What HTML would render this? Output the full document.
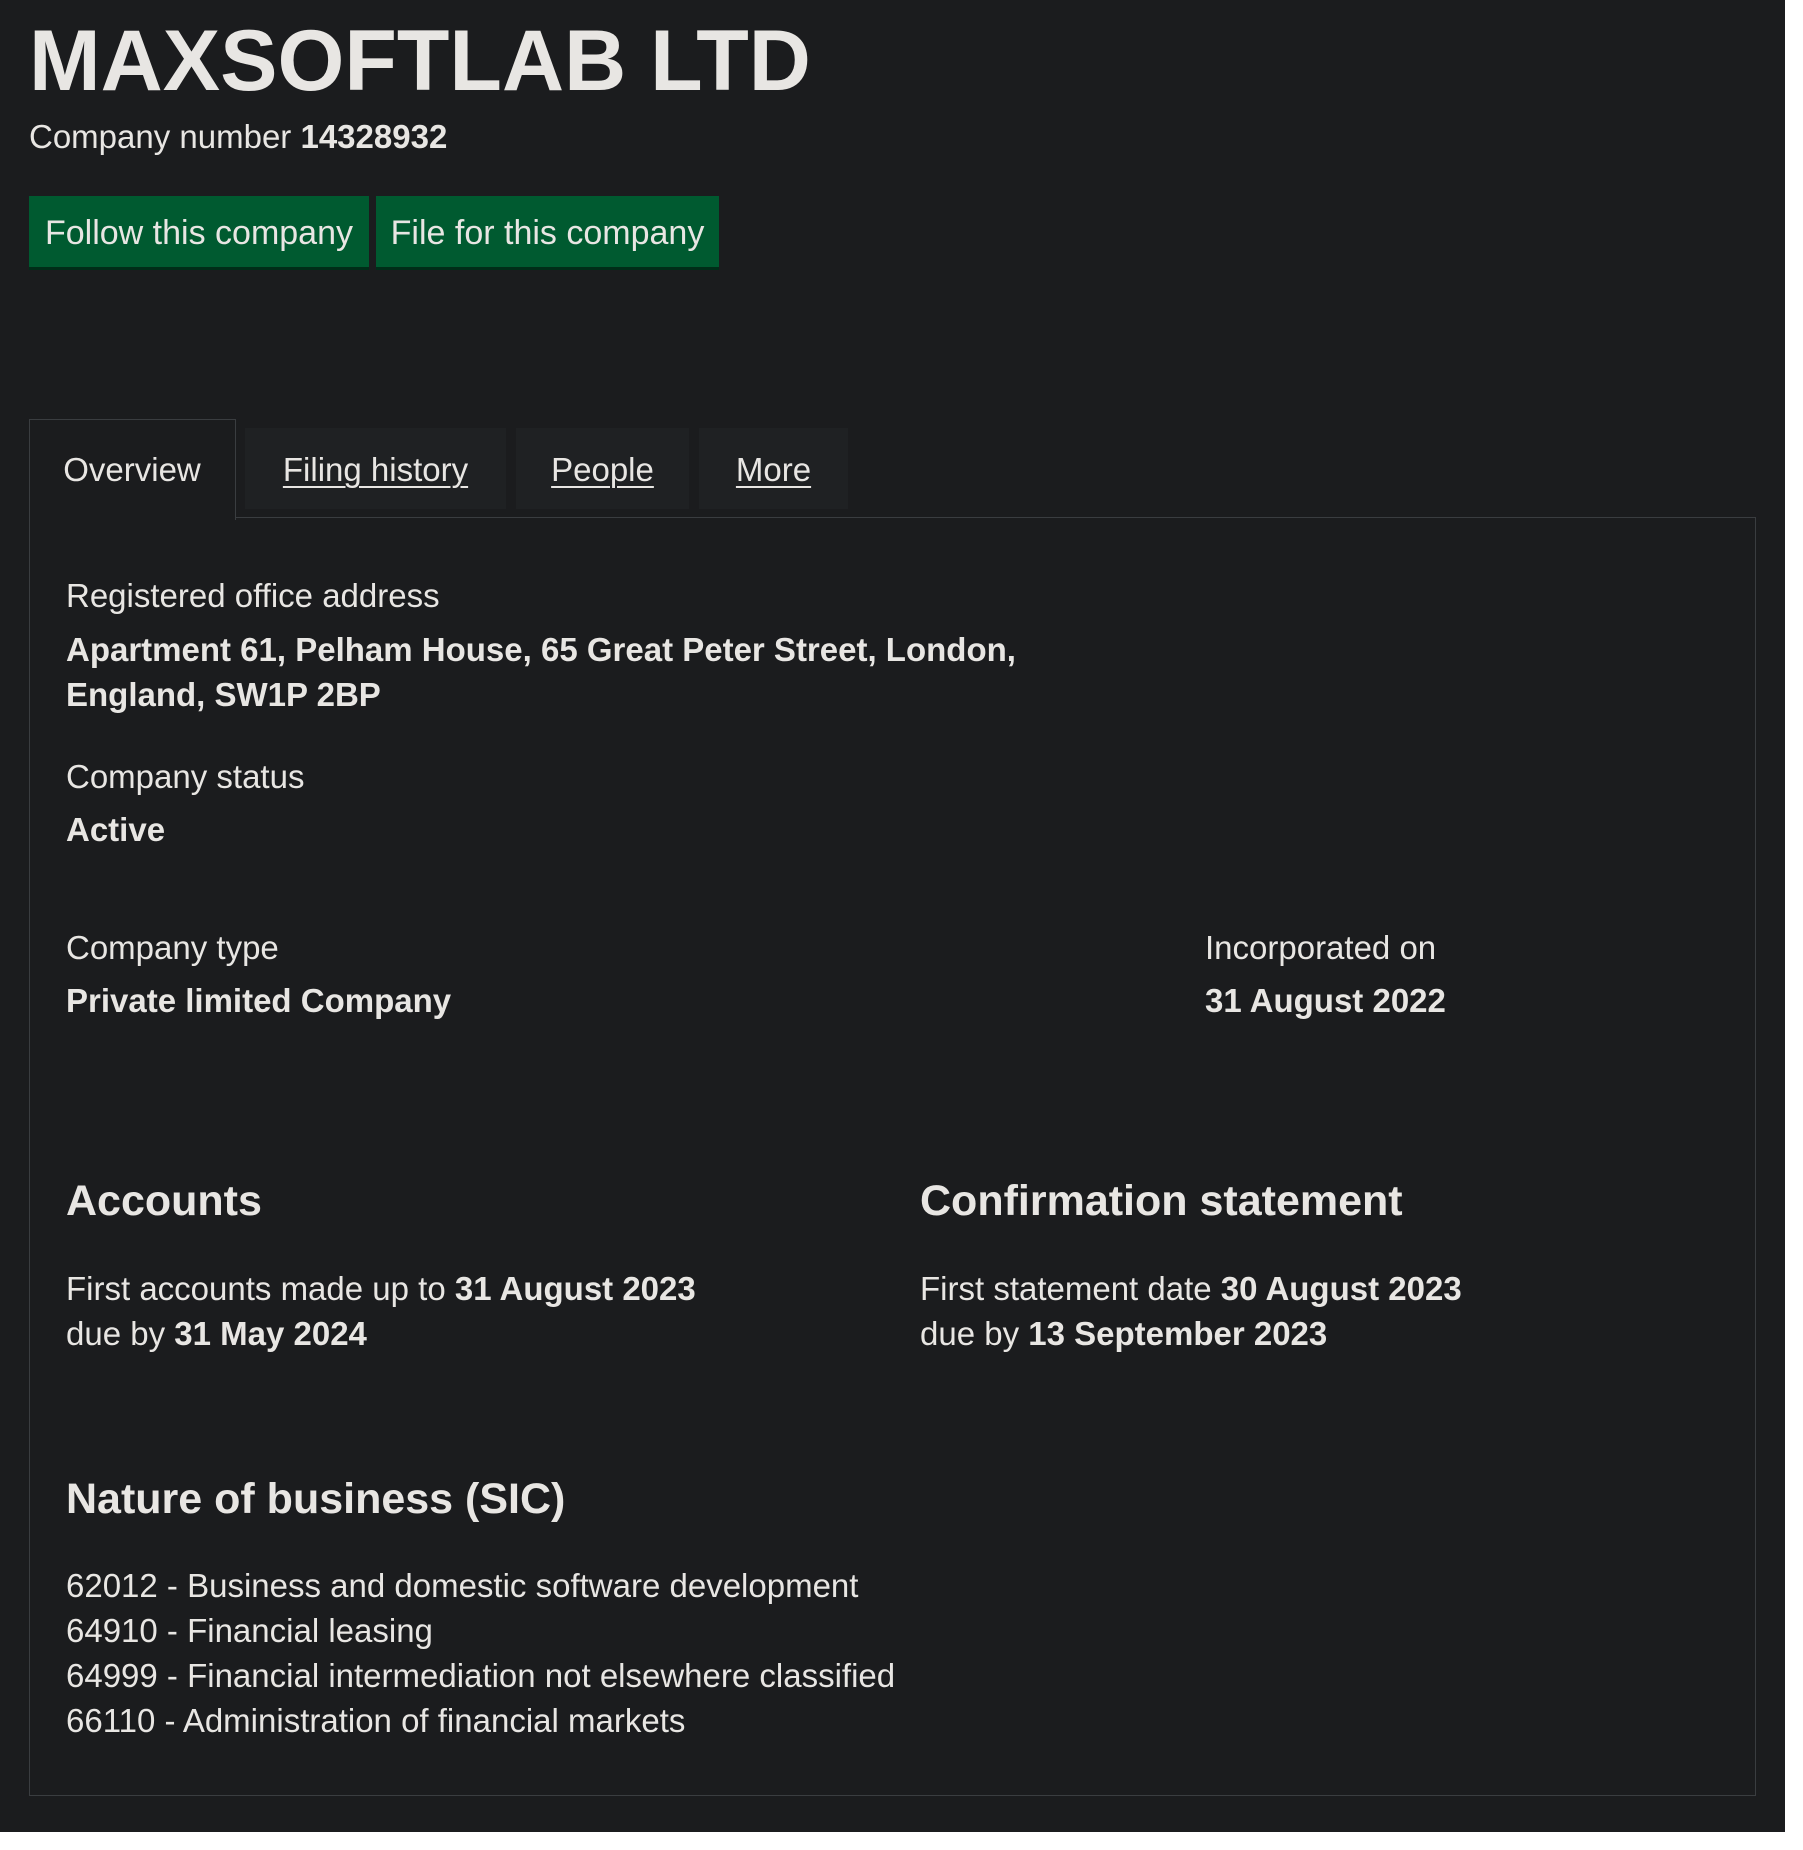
<!DOCTYPE html>
<html><head><meta charset="utf-8"><style>
html,body{margin:0;padding:0;background:#fff;width:1803px;height:1850px;overflow:hidden}
#bg{position:absolute;left:0;top:0;width:1785px;height:1832px;background:#1b1c1e}
.t{position:absolute;white-space:nowrap;color:#e8e6e3;font-family:"Liberation Sans",Arial,sans-serif;font-size:33px;line-height:36px}
b{font-weight:bold}
.btn{position:absolute;top:196px;height:71px;background:#005a30;box-shadow:0 3px 0 #002d18;color:#e8e6e3;font-family:"Liberation Sans",sans-serif;font-size:34px;line-height:74px;text-align:center}
.tab{position:absolute;top:428px;height:81px;background:#1f2123;color:#e8e6e3;font-family:"Liberation Sans",sans-serif;font-size:33px;line-height:84px;text-align:center}
.tab u{text-decoration-thickness:2px;text-underline-offset:5px}
</style></head><body>
<div id="bg"></div>
<div class="t" style="left:29px;top:16px;font-size:86px;line-height:90px;font-weight:bold">MAXSOFTLAB LTD</div>
<div class="t" style="left:29px;top:118px;font-size:33px;line-height:38px">Company number <b>14328932</b></div>
<div class="btn" style="left:29px;width:340px">Follow this company</div>
<div class="btn" style="left:376px;width:343px">File for this company</div>
<div style="position:absolute;left:29px;top:517px;width:1725px;height:1277px;border:1px solid #3a3d40"></div>
<div style="position:absolute;left:29px;top:419px;width:205px;height:100px;border:1px solid #3a3d40;border-bottom:none;background:#1b1c1e"></div>
<div class="tab" style="left:30px;top:428px;width:204px;background:transparent">Overview</div>
<div class="tab" style="left:245px;width:261px"><u>Filing history</u></div>
<div class="tab" style="left:516px;width:173px"><u>People</u></div>
<div class="tab" style="left:699px;width:149px"><u>More</u></div>

<div class="t" style="left:66px;top:578px">Registered office address</div>
<div class="t" style="left:66px;top:627px;font-weight:bold;line-height:45px">Apartment 61, Pelham House, 65 Great Peter Street, London,<br>England, SW1P 2BP</div>
<div class="t" style="left:66px;top:759px">Company status</div>
<div class="t" style="left:66px;top:812px;font-weight:bold">Active</div>
<div class="t" style="left:66px;top:930px">Company type</div>
<div class="t" style="left:66px;top:983px;font-weight:bold">Private limited Company</div>
<div class="t" style="left:1205px;top:930px">Incorporated on</div>
<div class="t" style="left:1205px;top:983px;font-weight:bold">31 August 2022</div>

<div class="t" style="left:66px;top:1177px;font-size:43px;line-height:48px;font-weight:bold">Accounts</div>
<div class="t" style="left:920px;top:1177px;font-size:43px;line-height:48px;font-weight:bold">Confirmation statement</div>
<div class="t" style="left:66px;top:1266px;line-height:45px">First accounts made up to <b>31 August 2023</b><br>due by <b>31 May 2024</b></div>
<div class="t" style="left:920px;top:1266px;line-height:45px">First statement date <b>30 August 2023</b><br>due by <b>13 September 2023</b></div>

<div class="t" style="left:66px;top:1475px;font-size:43px;line-height:48px;font-weight:bold">Nature of business (SIC)</div>
<div class="t" style="left:66px;top:1563px;line-height:45px">62012 - Business and domestic software development<br>64910 - Financial leasing<br>64999 - Financial intermediation not elsewhere classified<br>66110 - Administration of financial markets</div>
</body></html>
